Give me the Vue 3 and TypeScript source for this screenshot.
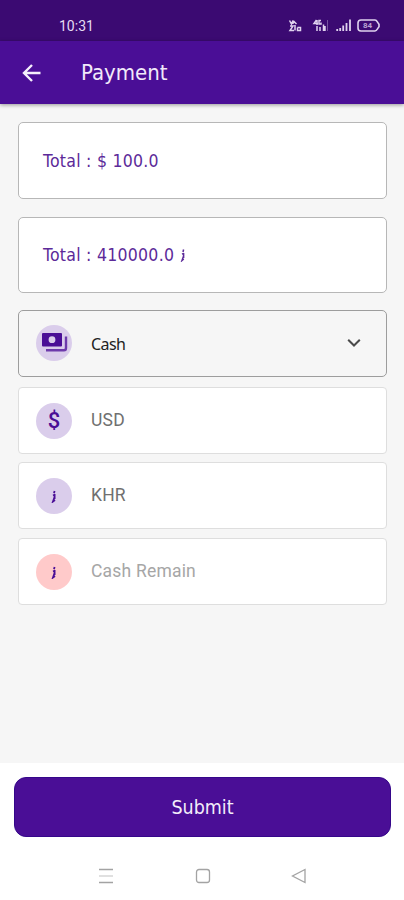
<script setup lang="ts">
interface Field {
  id: string
  label: string
  symbol: 'dollar' | 'riel'
  tone: 'lilac' | 'rose'
  muted?: boolean
}

const fields: Field[] = [
  { id: 'usd', label: 'USD', symbol: 'dollar', tone: 'lilac' },
  { id: 'khr', label: 'KHR', symbol: 'riel', tone: 'lilac' },
  { id: 'remain', label: 'Cash Remain', symbol: 'riel', tone: 'rose', muted: true },
]
</script>

<template>
  <div class="screen">
    <header class="status">
      <span class="clock">10:31</span>
      <div class="indicators">
        <svg class="net" width="16" height="14" viewBox="0 0 16 14">
          <path d="M2.500 1.500 4.500 5 6 1.500V5M6.500 2l3 3M3 7h3L3 11.500h4M8 6v5.500M10.500 8.500v3h3v-3h-3" />
        </svg>
        <svg class="net" width="17" height="14" viewBox="0 0 17 14">
          <path d="M5.500 1 3 4.500h4M6 1v5M10 1.500H8v3.500h2V3.500M6 7v5M9 8v4M12.500 5.500v6.500M14 7v5" />
          <path class="faint" d="M16.500 1v11" />
        </svg>
        <svg class="bars" width="15" height="13" viewBox="0 0 15 13">
          <path d="M1.200 10v2M4.200 9v3M7.200 6.500V12M10.500 4v8M14 .5V12" />
        </svg>
        <div class="battery">
          <svg width="23" height="13" viewBox="0 0 23 13">
            <path d="M4 1h14c2 0 2.200 2.200 4 4.200v2.600c-1.800 2-2 4.200-4 4.200H4q-3 0-3-3V4q0-3 3-3Z" />
          </svg>
          <span>84</span>
        </div>
      </div>
    </header>

    <div class="appbar">
      <svg class="back" width="20" height="20" viewBox="0 0 20 20">
        <path d="M18.500 10H2.500M10 2 2 10l8 8" />
      </svg>
      <h1>Payment</h1>
    </div>

    <main class="content">
      <div class="total">Total : $ 100.0</div>
      <div class="total">
        Total : 410000.0
        <svg class="riel small" width="6" height="14" viewBox="0 0 6 14">
          <path d="M3.600 1.500 3 4M3.600 5v5M2 6.200l1.600-.8M3.400 8.500 2 12.500l1.800-1.500" />
        </svg>
      </div>

      <button class="select" type="button">
        <span class="badge lilac">
          <svg width="27" height="20" viewBox="0 0 27 20">
            <path fill="#4a0e96" fill-rule="evenodd" d="M2 0h18q1 0 1 1v11.500q0 1-1 1H2q-1 0-1-1V1Q1 0 2 0ZM11 3.300a3.400 3.400 0 1 0 0 6.800a3.400 3.400 0 0 0 0-6.800Z" />
            <path fill="none" stroke="#6d3aab" stroke-width="2.400" d="M25 3.500V15q0 2.300-2 2.300H5" />
          </svg>
        </span>
        <span class="choice">Cash</span>
        <svg class="chevron" width="14" height="10" viewBox="0 0 14 10">
          <path d="m1.200 1.700 5.800 5.800 5.800-5.800" />
        </svg>
      </button>

      <div v-for="field in fields" :key="field.id" class="field">
        <span class="badge" :class="field.tone">
          <span v-if="field.symbol === 'dollar'" class="dollar">$</span>
          <svg v-else class="riel" width="6" height="14" viewBox="0 0 6 14">
            <path d="M3.600 2 3 4.200M3.600 5v5M2 6.500l1.600-.8M3.400 8.500 2 12.500l2-1.500" />
          </svg>
        </span>
        <span class="label" :class="{ muted: field.muted }">{{ field.label }}</span>
      </div>
    </main>

    <footer class="footer">
      <button class="submit" type="button">Submit</button>
      <nav class="system">
        <svg width="16" height="16" viewBox="0 0 16 16">
          <path d="M1 1.500h14M1 14.500h14" />
          <path class="pale" d="M1 8h14" />
        </svg>
        <svg width="16" height="16" viewBox="0 0 16 16">
          <rect x="1.500" y="1.500" width="13" height="13" rx="2.500" />
        </svg>
        <svg width="16" height="16" viewBox="0 0 16 16">
          <path d="M14 1.500v13L1.500 8Z" />
        </svg>
      </nav>
    </footer>
  </div>
</template>

<style>
body {
  margin: 0;
}
</style>

<style scoped>
.screen {
  display: flex;
  flex-direction: column;
  height: 900px;
  background: #f6f6f6;
  font-family: "DejaVu Sans Condensed", "DejaVu Sans", sans-serif;
  font-stretch: condensed;
}
.status {
  display: flex;
  justify-content: space-between;
  box-sizing: border-box;
  height: 41px;
  padding: 19px 24px 0 59px;
  background: #3b0a72;
  color: #e6dcf2;
}
.clock {
  font: 400 14px/14px Roboto, sans-serif;
}
.indicators {
  display: flex;
  height: 14px;
}
.indicators svg {
  display: block;
  fill: none;
  stroke: #dfd2ee;
}
.net {
  margin-right: 8px;
  stroke-width: 1.500;
}
.net .faint {
  stroke: #7753a0;
  stroke-width: 1;
}
.bars {
  margin-right: 6px;
  stroke-width: 1.8;
}
.battery {
  display: grid;
}
.battery > * {
  grid-area: 1 / 1;
}
.battery svg {
  stroke-width: 1.6;
}
.battery span {
  padding-left: 6px;
  font: 700 8px/13px Roboto, sans-serif;
  color: #b9a2d3;
}
.appbar {
  display: flex;
  align-items: center;
  box-sizing: border-box;
  height: 63px;
  padding-left: 22px;
  background: #4a0e96;
  box-shadow: 0 1px 4px rgba(0, 0, 0, 0.4);
}
.back {
  fill: none;
  stroke: #f5effc;
  stroke-width: 2.4;
}
h1 {
  margin: 0 0 0 39px;
  font-size: 22px;
  font-weight: 400;
  line-height: 28px;
  color: #f1e9fa;
}
.content {
  flex: 1;
  padding: 18px 17px 0 18px;
}
.total {
  display: flex;
  align-items: center;
  box-sizing: border-box;
  height: 77px;
  margin-bottom: 18px;
  padding-left: 24px;
  border: 1px solid #b7b7b7;
  border-radius: 5px;
  background: #fff;
  color: #5c2a99;
  font-size: 17.500px;
  letter-spacing: 0.270px;
}
.total + .total {
  height: 76px;
}
.riel {
  fill: none;
  stroke: #4a0e96;
  stroke-width: 1.800;
}
.riel.small {
  margin-left: 6px;
  stroke: #5c2a99;
  stroke-width: 1.500;
}
.select,
.field {
  display: flex;
  align-items: center;
  box-sizing: border-box;
  width: 100%;
  height: 67px;
  padding: 0 0 0 17px;
  border: 1px solid #dedede;
  border-radius: 4px;
  background: #fff;
}
.select {
  margin-top: -1px;
  margin-bottom: 10px;
  padding-right: 25px;
  padding-bottom: 2px;
  border-color: #9d9d9d;
  border-radius: 5px;
  background: #f6f6f6;
  font-family: inherit;
}
.field {
  margin-bottom: 8px;
}
.field:last-child {
  margin-top: 9px;
}
.badge {
  display: flex;
  align-items: center;
  justify-content: center;
  flex: none;
  width: 36px;
  height: 36px;
  margin-right: 19px;
  border-radius: 50%;
}
.lilac {
  background: #dacdeb;
}
.rose {
  background: #ffcaca;
}
.dollar {
  font: 500 22px/36px Roboto, sans-serif;
  color: #4a0e96;
}
.choice {
  padding-top: 3px;
  font: 400 16px/20px "Noto Sans", sans-serif;
  letter-spacing: -0.600px;
  color: #222;
}
.chevron {
  margin-top: 1px;
  margin-left: auto;
  fill: none;
  stroke: #4a4a4a;
  stroke-width: 2;
}
.label {
  padding-bottom: 2px;
  font: 400 17.500px/20px Roboto, sans-serif;
  letter-spacing: 0.200px;
  color: #707070;
}
.label.muted {
  color: #a6a6a6;
}
.footer {
  box-sizing: border-box;
  height: 137px;
  padding: 14px 13px 0 14px;
  background: #fff;
}
.submit {
  display: block;
  width: 100%;
  height: 60px;
  padding: 0;
  border: 1px solid #35078a;
  border-radius: 12px;
  background: #4a0e96;
  color: #f3edfa;
  font: inherit;
  font-size: 19.500px;
}
.system {
  display: flex;
  justify-content: space-between;
  padding: 31px 84px 0 84px;
}
.system svg {
  fill: none;
  stroke: #a3a3a3;
  stroke-width: 1.300;
}
.system .pale {
  stroke: #cfcfcf;
}
</style>
